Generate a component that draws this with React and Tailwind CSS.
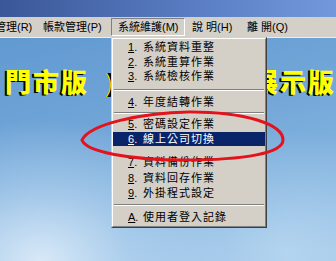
import React from "react";

const F = "font-['Liberation_Sans','Noto_Sans_CJK_TC',sans-serif]";

function Item({ n, label, h, active, extra = "" }) {
  return (
    <div
      className={`flex items-center pl-[15px] ${h} ${extra} ${
        active ? "bg-[#0a246a] text-white" : "text-black"
      }`}
    >
      <span className="w-[15px] text-[11px] leading-none">
        <span className="underline underline-offset-1">{n}</span>.
      </span>
      <span className="text-[11px] leading-none tracking-[1px]">{label}</span>
    </div>
  );
}

function Sep({ h, mt }) {
  return (
    <div className={`${h} ${mt} mx-[1px]`}>
      <div className="h-px bg-[#808080]" />
      <div className="h-px bg-white" />
    </div>
  );
}

export default function App() {
  return (
    <div className={`relative w-[336px] h-[261px] overflow-hidden flex flex-col ${F}`}>
      {/* title bar */}
      <div className="h-[17px] bg-[linear-gradient(90deg,#3a5798_0%,#5578bd_50%,#7399dc_100%)]" />
      {/* menu bar */}
      <div className="h-[20px] bg-[#d4d0c8] flex items-center text-[11px] text-black leading-none">
        <div className="ml-[-5px] w-[41px]">管理(R)</div>
        <div className="w-[75px] pl-[7px]">帳款管理(P)</div>
        <div className="w-[74px] h-[18px] pl-[6px] flex items-center border-t border-l border-t-[#808080] border-l-[#808080] border-b border-r border-b-white border-r-white">
          系統維護(M)
        </div>
        <div className="w-[55px] pl-[7px]">說 明(H)</div>
        <div className="w-[60px] pl-[7px]">離 開(Q)</div>
      </div>
      <div className="h-px bg-[#e9eef4]" />
      {/* sky */}
      <div className="flex-1 bg-[radial-gradient(ellipse_at_12%_100%,rgba(225,238,250,0.9)_0%,rgba(200,224,245,0.5)_22%,transparent_45%),radial-gradient(ellipse_at_85%_95%,rgba(200,225,246,0.6)_0%,transparent_40%),linear-gradient(165deg,#6199d1_0%,#72a6d8_40%,#86b6e0_75%,#9cc4e7_100%)]">
        <div className="pt-[32px] flex text-[26px] leading-[26px] font-black text-[#ffff00] tracking-[2px] [text-shadow:-2px_1px_0_#000]">
          <div className="pl-[5px]">門市版</div>
          <div className="ml-[18px] text-black [text-shadow:-1px_0_0_#ffff00] font-['Liberation_Sans',sans-serif] font-bold">)</div>
          <div className="ml-auto">展示版</div>
        </div>
      </div>

      {/* dropdown menu */}
      <div className="absolute left-[111px] top-[37px] w-[156px] bg-[#d4d0c8] border border-t-[#d4d0c8] border-l-[#d4d0c8] border-r-[#404040] border-b-[#404040]">
        <div className="border border-t-white border-l-white border-r-[#808080] border-b-[#808080] pt-[1px] pb-[1px]">
          <Item n="1" label="系統資料重整" h="h-[15px]" />
          <Item n="2" label="系統重算作業" h="h-[14px]" />
          <Item n="3" label="系統檢核作業" h="h-[15px]" />
          <Sep h="h-[11px]" mt="pt-[5px]" />
          <Item n="4" label="年度結轉作業" h="h-[14px]" />
          <Sep h="h-[7px]" mt="pt-[3px]" />
          <Item n="5" label="密碼設定作業" h="h-[16px]" />
          <Item n="6" label="線上公司切換" h="h-[14px]" active />
          <Item n="7" label="資料備份作業" h="h-[18px]" extra="mt-[7px]" />
          <Item n="8" label="資料回存作業" h="h-[15px]" />
          <Item n="9" label="外掛程式設定" h="h-[15px]" />
          <Sep h="h-[9px]" mt="pt-[3px]" />
          <Item n="A" label="使用者登入記錄" h="h-[15px]" />
        </div>
      </div>

      {/* red annotation ellipse */}
      <svg className="absolute left-0 top-0 pointer-events-none" width="336" height="261" viewBox="0 0 336 261">
        <path
          d="M82 140 C 90 124, 140 113, 190 112 C 245 112, 283 124, 283 140 C 283 153, 245 160, 185 160 C 130 160, 86 152, 82 140 Z"
          fill="none"
          stroke="#e3121b"
          strokeWidth="3"
        />
      </svg>
    </div>
  );
}
